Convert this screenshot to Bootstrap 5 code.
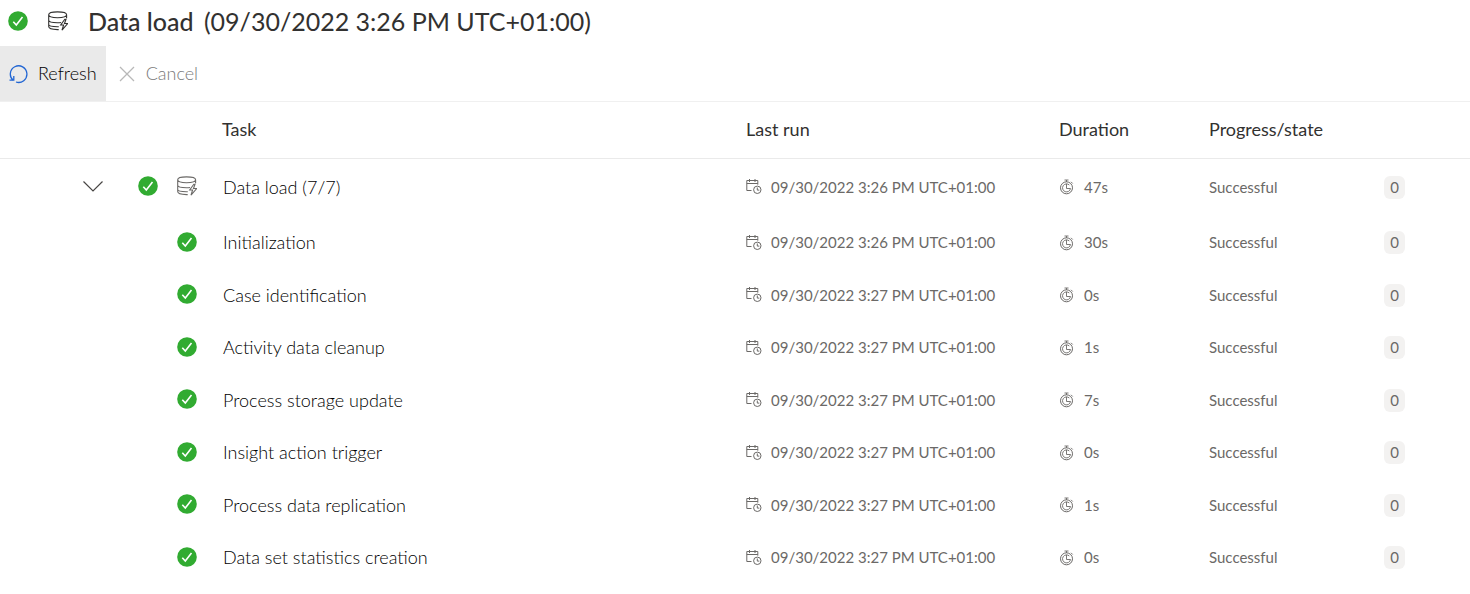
<!DOCTYPE html>
<html lang="en">
<head>
<meta charset="utf-8">
<meta name="viewport" content="width=device-width, initial-scale=1">
<title>Data load</title>
<link href="https://cdn.jsdelivr.net/npm/bootstrap@5.3.0/dist/css/bootstrap.min.css" rel="stylesheet">
<style>
body{font-family:Lato,"Open Sans",sans-serif;font-size:18px;color:#323130;background:#fff}
svg{display:block;flex:none;fill:none;stroke:currentColor}
.page-title{height:46px;padding:0 8px 5px;gap:20px}
.page-title h1{font-size:25px;line-height:32px;font-weight:500}
.page-title .when{font-weight:400}
.i20{width:20px;height:20px}
.i16{width:16px;height:16px}
.toolbar{height:56px;border-bottom:1px solid #f0f0f0}
.toolbar .btn{--bs-btn-font-size:18px;--bs-btn-font-weight:300;--bs-btn-border-radius:0;--bs-btn-border-width:0px;--bs-btn-color:#000;--bs-btn-bg:transparent;--bs-btn-hover-bg:#eaeaea;--bs-btn-disabled-color:#7a7a7a;--bs-btn-disabled-opacity:1;gap:9px;padding:0 9px}
.toolbar .btn.refresh{--bs-btn-bg:#eaeaea}
.toolbar .cancel{padding-left:11px}
.refresh svg{color:#2266d3}
.cancel svg{color:#b8b8b8}
.tasks{table-layout:fixed;color:#323130}
.tasks th,.tasks td{padding:0;vertical-align:middle;border:0;white-space:nowrap}
.tasks thead th{height:56px;font-weight:400;border-bottom:1px solid #eaeaea}
.tasks tbody tr{height:52px}
.tasks tbody tr:nth-child(even){height:53px}
.tasks tbody tr.parent{height:58px}
.tasks tbody th{font-weight:300;color:#000;padding-left:1px}
.tasks tbody td{font-size:15px;color:#6b6967}
.c-icons{width:222px}.c-run{width:313px}.c-dur{width:150px}.c-state{width:175px}.c-count{width:86px}
.marks{padding-right:25px;padding-bottom:2px;gap:19px}
.marks .btn{margin-right:16px;color:#484644}
.stat{gap:9px}
.count{display:inline-block;min-width:21px;padding:0 6px;font-size:15px;line-height:23px;border-radius:6px;background:#f3f2f1}
</style>
</head>
<body>
<svg class="d-none" aria-hidden="true">
  <symbol id="ok" viewBox="0 0 20 20"><circle cx="10" cy="10" r="9.8" fill="#31ab31" stroke="none"/><path d="M5.3 10.8l3 3.2 6.2-8" stroke="#fff" stroke-width="1.6"/></symbol>
  <symbol id="db" viewBox="0 0 20 20"><g stroke-width="1.1"><path d="M.7 3.8C.7 2.1 4.4.9 9.5.9s9.1 1.2 9.1 2.9-4 2.9-9.1 2.9S.7 5.5.7 3.8v11.8c0 1.7 3.6 3 8.8 3h1.2M18.6 3.8v3.500M.7 9.300c0 1.700 3.900 2.500 8.800 2.500 1.300 0 2.500-.1 3.500-.3M.7 13.500c0 1.400 3.900 2.200 8.800 2.200h1.300M16.8 8.300l-4.100 5.700h2.900l-1.600 5.100 5.700-6.600h-3.200l1.500-4.200z"/></g></symbol>
  <symbol id="cal" viewBox="0 0 16 16"><path d="M5.5 11.5H.8v-10h11v4.2M.8 4.5h11M3.5 0v3M9 0v3"/><circle cx="11.3" cy="10.8" r="3.7"/><path d="M11.3 8.5v2.6h2"/></symbol>
  <symbol id="watch" viewBox="0 0 16 16"><circle cx="7.5" cy="8.8" r="6"/><path d="M10.3 6A4 4 0 1 0 11.5 9.500H7.500V4.800M5.500 1h4M7.500 1v2M12 2.800l1.700 1.700" stroke-width=".9"/></symbol>
</svg>

<header class="page-title d-flex align-items-center">
  <svg class="i20" role="img" aria-label="Successful"><use href="#ok"/></svg>
  <svg class="i20" aria-hidden="true"><use href="#db"/></svg>
  <h1 class="mb-0">Data load <span class="when ms-1">(09/30/2022 3:26 PM UTC+01:00)</span></h1>
</header>

<div class="toolbar d-flex" role="toolbar" aria-label="Actions">
  <button type="button" class="btn refresh d-flex align-items-center"><svg class="i20" viewBox="0 0 20 20" aria-hidden="true"><path d="M4.3 16.5A8.3 8.3 0 1 1 7 18M.5 16.2h4.300v-4.300" stroke-width="1.3"/></svg>Refresh</button>
  <button type="button" class="btn cancel d-flex align-items-center" disabled><svg class="i20" viewBox="0 0 20 20" aria-hidden="true"><path d="M3 3l14 14M17 3L3 17" stroke-width="1.3"/></svg>Cancel</button>
</div>

<table class="tasks table table-borderless mb-0 w-100">
  <colgroup><col class="c-icons"><col><col class="c-run"><col class="c-dur"><col class="c-state"><col class="c-count"></colgroup>
  <thead><tr><th></th><th scope="col">Task</th><th scope="col">Last run</th><th scope="col">Duration</th><th scope="col">Progress/state</th><th></th></tr></thead>
  <tbody id="rows"></tbody>
</table>

<script src="https://cdn.jsdelivr.net/npm/bootstrap@5.3.0/dist/js/bootstrap.bundle.min.js"></script>
<script>
const tasks = [
  ['Data load (7/7)', '3:26', '47s'], ['Initialization', '3:26', '30s'],
  ['Case identification', '3:27', '0s'], ['Activity data cleanup', '3:27', '1s'],
  ['Process storage update', '3:27', '7s'], ['Insight action trigger', '3:27', '0s'],
  ['Process data replication', '3:27', '1s'], ['Data set statistics creation', '3:27', '0s']
];
const icon = (id, size) => `<svg class="${size}" aria-hidden="true"><use href="#${id}"/></svg>`;
document.getElementById('rows').innerHTML = tasks.map(([name, time, length], i) => `
  <tr class="${i ? '' : 'parent'}">
    <td><div class="marks d-flex align-items-center justify-content-end">
      ${i ? '' : '<button type="button" class="btn border-0 p-0" aria-label="Collapse"><svg class="i20" viewBox="0 0 20 20"><path d="M.5 5.5L10 15l9.5-9.5" stroke-width="1.2"/></svg></button>'}
      ${icon('ok', 'i20')}${i ? '' : icon('db', 'i20')}
    </div></td>
    <th scope="row">${name}</th>
    <td><div class="stat d-flex align-items-center">${icon('cal', 'i16')}09/30/2022 ${time} PM UTC+01:00</div></td>
    <td><div class="stat d-flex align-items-center">${icon('watch', 'i16')}${length}</div></td>
    <td>Successful</td>
    <td><span class="count text-center">0</span></td>
  </tr>`).join('');
</script>
</body>
</html>
